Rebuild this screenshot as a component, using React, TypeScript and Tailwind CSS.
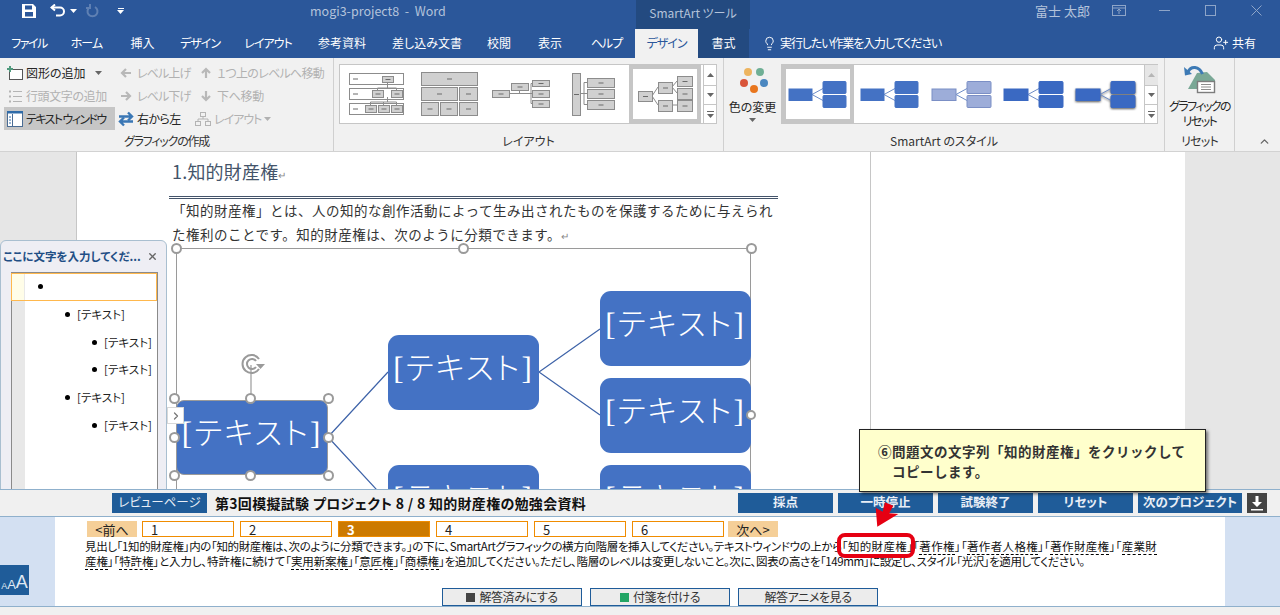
import { ChevronRight, ChevronUp, Lightbulb, UserPlus, X } from "lucide-react";
import type { ReactNode } from "react";

const tabs: [string, string][] = [
  ["ファイル", "w-[58px] tracking-[-1.5px]"],
  ["ホーム", "w-[57px] tracking-[-1px]"],
  ["挿入", "w-[55px]"],
  ["デザイン", "w-[60px] tracking-[-1px]"],
  ["レイアウト", "w-[76px] tracking-[-1px]"],
  ["参考資料", "w-[72px]"],
  ["差し込み文書", "w-[98px]"],
  ["校閲", "w-[46px]"],
  ["表示", "w-[56px]"],
  ["ヘルプ", "w-[57px] tracking-[-1px]"],
];

const Caret = ({ className = "" }: { className?: string }) => (
  <svg width="7" height="4" viewBox="0 0 7 4" className={className}>
    <path d="M0 0h7L3.5 4z" fill="currentColor" />
  </svg>
);

const Cmd = ({ icon, label, w, dim, active, caret, tight }: { icon: ReactNode; label: string; w: string; dim?: boolean; active?: boolean; caret?: boolean; tight?: string }) => (
  <div className={`flex h-[23px] items-center gap-[2px] pl-[1px] text-[12px] ${w} ${dim ? "text-[#b1b1b1]" : "text-[#262626]"} ${active ? "bg-[#c6c6c6]" : ""}`}>
    <span className="flex w-[19px] shrink-0 justify-center">{icon}</span>
    <span className={`whitespace-nowrap ${tight ?? ""}`}>{label}</span>
    {caret && <Caret className="ml-[7px] text-[#666]" />}
  </div>
);

const Arrow = ({ d }: { d: string }) => (
  <svg width="12" height="12" viewBox="0 0 12 12" fill="none" stroke="#b8b8b8" strokeWidth="2.2">
    <path d={d} />
  </svg>
);

const ScrollBtns = ({ dimTop }: { dimTop?: boolean }) => (
  <div className="flex h-full w-[14px] shrink-0 flex-col border-l border-[#c6c6c6] text-[#666]">
    <div className={`flex h-[21px] items-center justify-center border-b border-[#c6c6c6] ${dimTop ? "bg-[#e6e6e6] text-[#b5b5b5]" : ""}`}>
      <Caret className="rotate-180" />
    </div>
    <div className="flex h-[19px] items-center justify-center border-b border-[#c6c6c6]">
      <Caret />
    </div>
    <div className="flex flex-1 flex-col items-center justify-center gap-[2px]">
      <span className="h-px w-[7px] bg-[#666]" />
      <Caret />
    </div>
  </div>
);

const G = ({ x, y, w, h, dash = true }: { x: number; y: number; w: number; h: number; dash?: boolean }) => (
  <g>
    <rect x={x + 0.5} y={y + 0.5} width={w} height={h} fill="#d0d0d0" stroke="#8c8c8c" />
    {dash && <path d={`M${x + w / 2 - 2} ${y + h / 2 + 0.5}h5`} stroke="#6a6a6a" />}
  </g>
);

const LayoutThumbs = () => (
  <svg width="363" height="58" viewBox="339 65 363 58" className="shrink-0">
    <g fill="#fff" stroke="#8c8c8c">
      <rect x="348.5" y="73.5" width="54" height="11" />
      <rect x="348.5" y="88.5" width="54" height="11" />
      <rect x="348.5" y="103.5" width="54" height="11" />
    </g>
    <path d="M352 79h5M352 94h5M352 109h5" stroke="#6a6a6a" />
    <path d="M386.5 82v6M376.5 88h19M376.5 88v3M395.5 88v3M386.5 97v5M369.5 102h26M369.5 102v3M382.5 102v3M395.5 102v3" stroke="#8c8c8c" fill="none" />
    <G x={381} y={76} w={11} h={6} />
    <G x={371} y={90} w={11} h={7} />
    <G x={390} y={90} w={11} h={7} />
    <G x={364} y={105} w={11} h={7} />
    <G x={377} y={105} w={11} h={7} />
    <G x={390} y={105} w={11} h={7} />

    <G x={420} y={72} w={56} h={13} />
    <G x={420} y={87} w={36} h={13} />
    <G x={458} y={87} w={18} h={13} />
    <G x={420} y={102} w={17} h={13} />
    <G x={439} y={102} w={17} h={13} />
    <G x={458} y={102} w={18} h={13} />

    <path d="M508 93.5h23M518.5 90v4M530 83.5v20M530 83.5h1M530 103.5h1" stroke="#8c8c8c" fill="none" />
    <G x={491} y={90} w={17} h={7} />
    <G x={510} y={83} w={17} h={7} />
    <G x={531} y={80} w={17} h={6} />
    <G x={531} y={90} w={17} h={7} />
    <G x={531} y={100} w={17} h={7} />

    <path d="M579 93.5h7M583 82.5v22M583 82.5h3M583 104.5h3" stroke="#8c8c8c" fill="none" />
    <G x={571} y={73} w={8} h={42} />
    <G x={586} y={78} w={27} h={9} />
    <G x={586} y={89} w={27} h={9} />
    <G x={586} y={100} w={27} h={9} />

    <rect x="630" y="67" width="68" height="54" fill="none" stroke="#c6c6c6" strokeWidth="4" />
    <path d="M651 96l6-9M651 96l6 9M671 87l5-6M671 87l5 6M671 105h5" stroke="#8c8c8c" fill="none" />
    <G x={637} y={91} w={14} h={10} />
    <G x={657} y={82} w={14} h={11} />
    <G x={657} y={100} w={14} h={11} />
    <G x={676} y={76} w={15} h={10} />
    <G x={676} y={88} w={15} h={11} />
    <G x={676} y={100} w={15} h={11} />
  </svg>
);

const StyleShape = ({ x, w, fill, stroke, shadow }: { x: number; w: number; fill: string; stroke: string; shadow?: boolean }) => (
  <g style={shadow ? { filter: "drop-shadow(0 1px 1px #555)" } : undefined}>
    <path d={`M${x + w} 94.5l${11} -6M${x + w} 94.5l${11} 6`} stroke="#6d8cc7" fill="none" />
    <rect x={x} y="89" width={w} height="11.5" fill={fill} stroke={stroke} />
    <rect x={x + w + 11} y="81.5" width={w} height="12" rx="1" fill={fill} stroke={stroke} />
    <rect x={x + w + 11} y="95.5" width={w} height="12" rx="1" fill={fill} stroke={stroke} />
  </g>
);

const StyleThumbs = () => (
  <svg width="362" height="58" viewBox="781 65 362 58" className="shrink-0">
    <rect x="783" y="67" width="68" height="54" fill="none" stroke="#c6c6c6" strokeWidth="4" />
    <StyleShape x={788} w={23} fill="#4472c4" stroke="#4472c4" />
    <StyleShape x={860} w={23} fill="#4472c4" stroke="#4472c4" />
    <StyleShape x={931} w={24} fill="#9dadd9" stroke="#7b8fc5" />
    <StyleShape x={1003} w={24} fill="#3a69c2" stroke="#3a69c2" />
    <StyleShape x={1075} w={24} fill="#3a69c2" stroke="#3a69c2" shadow />
  </svg>
);

const Ribbon = () => (
  <div className="flex h-[94px] shrink-0 border-b border-[#d2d2d2] bg-[#f1f1f1]">
    {/* Graphic */}
    <div className="flex w-[334px] flex-col border-r border-[#d0d0d0] pt-[3px]">
      <div className="flex flex-1 pl-[4px]">
        <div className="flex w-[111px] flex-col">
          <Cmd
            w="w-[111px]"
            caret
            label="図形の追加"
            icon={
              <svg width="16" height="14" viewBox="0 0 16 14" fill="none">
                <rect x="2.5" y="3.5" width="13" height="10" stroke="#555" fill="#fff" />
                <path d="M3 0v6M0 3h6" stroke="#4e9a7d" strokeWidth="2" />
              </svg>
            }
          />
          <Cmd
            w="w-[111px]"
            dim
            label="行頭文字の追加"
            tight="tracking-[-0.4px]"
            icon={
              <svg width="14" height="14" viewBox="0 0 14 14" fill="none" stroke="#b4b4b4">
                <path d="M5 2.5h9M5 7.5h9M5 12.5h9" />
                <path d="M1 2.5h2M1 7.5h2M1 12.5h2" strokeWidth="2" />
              </svg>
            }
          />
          <Cmd
            w="w-[111px]"
            active
            label="テキスト ウィンドウ"
            tight="tracking-[-1.6px]"
            icon={
              <svg width="16" height="16" viewBox="0 0 16 16" fill="none">
                <rect x=".5" y=".5" width="15" height="15" fill="#fff" stroke="#4a6c94" />
                <path d="M0 1h16" stroke="#2f6ba8" strokeWidth="3" />
                <path d="M5.5 3v12" stroke="#4a6c94" />
                <path d="M2 6h2M2 9h2M2 12h2" stroke="#2f6ba8" />
              </svg>
            }
          />
        </div>
        <div className="flex w-[80px] flex-col">
          <Cmd w="w-[80px]" dim label="レベル上げ" tight="tracking-[-0.9px]" icon={<Arrow d="M11 6H2M6 2L2 6l4 4" />} />
          <Cmd w="w-[80px]" dim label="レベル下げ" tight="tracking-[-0.9px]" icon={<Arrow d="M1 6h9M6 2l4 4-4 4" />} />
          <Cmd
            w="w-[80px]"
            label="右から左"
            tight="tracking-[-0.6px]"
            icon={
              <svg width="16" height="16" viewBox="0 0 16 16" fill="none" stroke="#3a77b5" strokeWidth="2.4">
                <path d="M1 5.5h13M10 1.5l4 4-4 4" />
                <path d="M15 10.5H2M6 6.5l-4 4 4 4" />
              </svg>
            }
          />
        </div>
        <div className="flex flex-col">
          <Cmd w="w-[130px]" dim label="１つ上のレベルへ移動" tight="tracking-[-0.7px]" icon={<Arrow d="M6 11V2M2 6l4-4 4 4" />} />
          <Cmd w="w-[130px]" dim label="下へ移動" tight="tracking-[-0.3px]" icon={<Arrow d="M6 1v9M2 6l4 4 4-4" />} />
          <div className="flex h-[23px] items-center gap-[3px] text-[12px] text-[#b1b1b1]">
            <svg width="16" height="14" viewBox="0 0 16 14" fill="none" stroke="#b4b4b4">
              <rect x="5.5" y=".5" width="5" height="4" />
              <rect x=".5" y="9.5" width="5" height="4" />
              <rect x="10.5" y="9.5" width="5" height="4" />
              <path d="M8 5v2M3 9V7h10v2" />
            </svg>
            <span className="tracking-[-1px]">レイアウト</span>
            <Caret />
          </div>
        </div>
      </div>
      <div className="flex h-[20px] items-center justify-center text-[12px] tracking-[-1.2px] text-[#333]">グラフィックの作成</div>
    </div>

    {/* Layout gallery */}
    <div className="flex w-[390px] flex-col border-r border-[#d0d0d0] pt-[6px]">
      <div className="ml-[5px] flex h-[60px] w-[378px] items-center border border-[#c6c6c6] bg-white">
        <LayoutThumbs />
        <ScrollBtns />
      </div>
      <div className="mt-auto flex h-[20px] items-center justify-center text-[12px] text-[#333]">レイアウト</div>
    </div>

    {/* SmartArt styles */}
    <div className="flex w-[441px] flex-col border-r border-[#d0d0d0] pt-[6px]">
      <div className="flex">
        <div className="flex w-[57px] flex-col items-center">
          <svg width="30" height="32" viewBox="0 0 30 32">
            <circle cx="10" cy="8" r="4" fill="#edb45f" />
            <circle cx="22" cy="8" r="4" fill="#6faf95" />
            <circle cx="6" cy="19" r="4" fill="#d9553a" />
            <circle cx="26" cy="19" r="4" fill="#4b87c0" />
            <circle cx="16" cy="25" r="4" fill="#e8761e" />
          </svg>
          <span className="mt-[2px] text-[12px] leading-[17px] text-[#262626]">色の変更</span>
          <Caret className="mt-[3px] text-[#666]" />
        </div>
        <div className="flex h-[60px] w-[377px] items-center border border-[#c6c6c6] bg-white">
          <StyleThumbs />
          <ScrollBtns dimTop />
        </div>
      </div>
      <div className="mt-auto flex h-[20px] items-center justify-center text-[12px] text-[#333]">SmartArt のスタイル</div>
    </div>

    {/* Reset */}
    <div className="flex w-[70px] flex-col items-center border-r border-[#d0d0d0] pt-[6px]">
      <svg width="32" height="30" viewBox="0 0 32 30" fill="none" className="shrink-0">
        <path d="M4 25L13 9l10-1 8 8v9z" fill="#7aa896" />
        <rect x="13.5" y="17.5" width="17" height="11" fill="#fff" stroke="#7d7d7d" strokeWidth="1.4" />
        <path d="M17 20.5h10M17 23h10M17 25.5h10" stroke="#8d8d8d" />
        <path d="M18.5 10C15 2 7 1.500 4 8" stroke="#3d7ab5" strokeWidth="3" />
        <path d="M0 3l1 8.500 7-1.500z" fill="#3d7ab5" />
      </svg>
      <div className="mt-[4px] whitespace-nowrap text-center text-[12px] leading-[15px] tracking-[-1.6px] text-[#262626]">
        グラフィックの
        <br />
        リセット
      </div>
      <div className="mt-auto flex h-[20px] items-center text-[12px] tracking-[-0.8px] text-[#333]">リセット</div>
    </div>
    <div className="flex flex-1 items-end justify-end pb-[3px] pr-[9px]">
      <ChevronUp size={13} strokeWidth={2.5} className="text-[#666]" />
    </div>
  </div>
);

const Handle = ({ x, y, small }: { x: number; y: number; small?: boolean }) => (
  <span
    className={`absolute rounded-full border-[2px] border-[#9a9a9a] bg-white ${small ? "h-[10px] w-[10px]" : "h-[11px] w-[11px]"}`}
    style={{ left: x - 5, top: y - 5 }}
  />
);

const nodeText = "flex items-center justify-center bg-[#4472c4] pb-[6px] font-['Liberation_Serif','Noto_Sans_CJK_JP',serif] text-[31px] font-extralight tracking-[2px] text-white";

const Node = ({ x, y, h = 75 }: { x: number; y: number; h?: number }) => (
  <div className={`absolute w-[151px] rounded-[11px] ${nodeText}`} style={{ left: x, top: y, height: h }}>
    <span className="whitespace-nowrap">[テキスト]</span>
  </div>
);

const SmartArtCanvas = () => (
  <div className="relative ml-[7px] mt-[2px] h-[260px] w-[575px]">
    <div className="absolute left-0 top-0 h-[400px] w-[575px] border border-[#9a9a9a]" />
    <svg className="absolute left-0 top-0" width="575" height="260" fill="none" stroke="#3e63a8" strokeWidth="1.2">
      <path d="M152 189L212 124M152 189L212 254M363 124L424 81M363 124L424 167M363 254h61" />
      <path d="M75 117V152" stroke="#9a9a9a" />
    </svg>
    <Node x={212} y={87} />
    <Node x={424} y={43} />
    <Node x={424} y={130} />
    <Node x={212} y={217} />
    <Node x={424} y={217} />
    <div className={`absolute left-0 top-[152px] h-[75px] w-[152px] rounded-[8px] border border-[#9a9a9a] ${nodeText}`}>
      <span className="whitespace-nowrap">[テキスト]</span>
    </div>
    <Handle x={0} y={0} />
    <Handle x={287} y={0} />
    <Handle x={575} y={0} />
    <Handle x={575} y={167} small />
    <Handle x={-2} y={150} />
    <Handle x={74} y={150} />
    <Handle x={152} y={150} />
    <Handle x={-2} y={189} />
    <Handle x={152} y={189} />
    <Handle x={-2} y={227} />
    <Handle x={74} y={227} />
    <Handle x={152} y={227} />
    <svg className="absolute left-[64px] top-[105px]" width="26" height="22" viewBox="0 0 26 22" fill="none" stroke="#9a9a9a" strokeWidth="2">
      <path d="M19 16A9 9 0 1 1 19 6" />
      <path d="M16 14A5 5 0 1 1 16 8" />
      <path d="M16 11h9l-4.5 5z" fill="#9a9a9a" stroke="none" />
    </svg>
  </div>
);

const PaneRow = ({ pl, label }: { pl: string; label?: string }) => (
  <div className={`flex h-[27.7px] items-center gap-[7px] whitespace-nowrap ${pl}`}>
    <span className="relative z-10 h-[5px] w-[5px] rounded-full bg-black" />
    {label && <span>{label}</span>}
  </div>
);

const Pane = () => (
  <div className="absolute left-0 top-[88px] flex h-[261px] w-[167px] flex-col rounded-t-[6px] border border-[#a9bfd0] bg-[#eeeef4]">
    <div className="flex h-[31px] shrink-0 items-center justify-between pl-[2px] pr-[8px]">
      <span className="whitespace-nowrap text-[11.5px] font-bold text-[#1f4e85]">ここに文字を入力してくだ...</span>
      <X size={11} strokeWidth={3} className="text-[#666]" />
    </div>
    <div className="ml-[10px] flex h-[218px] w-[147px] border border-[#8a8a8a] bg-white">
      <div className="w-[13px] shrink-0 bg-[#e8e8e8]" />
      <div className="flex-1 text-[11.5px] text-[#222]">
        <PaneRow pl="pl-[13px]" />
        <PaneRow pl="pl-[40px]" label="[テキスト]" />
        <PaneRow pl="pl-[67px]" label="[テキスト]" />
        <PaneRow pl="pl-[67px]" label="[テキスト]" />
        <PaneRow pl="pl-[40px]" label="[テキスト]" />
        <PaneRow pl="pl-[67px]" label="[テキスト]" />
      </div>
    </div>
    <div className="absolute left-[10px] top-[32px] h-[28px] w-[146px] border border-[#ffb84d]">
      <div className="h-full w-[12px] bg-[#fffde8]" />
    </div>
  </div>
);

const DocArea = () => (
  <div className="relative flex min-h-0 flex-1 overflow-hidden bg-[#e6e6e6]">
    <div className="w-[77px] shrink-0 border-r border-[#c6c6c6]" />
    <div className="w-[794px] shrink-0 border-r border-[#c6c6c6] bg-white pl-[92px]">
      <div className="mt-[8px] h-[22px] whitespace-nowrap pl-[3px] text-[18px] font-normal leading-[22px] tracking-[0.2px] text-[#44546a]">
        1.知的財産権<span className="text-[10px] text-[#888]">↵</span>
      </div>
      <div className="mt-[14px] h-[3px] w-[609px] border-y border-[#44546a]" />
      <div className="-mt-[1px] pl-[3px] text-[13.5px] tracking-[0.5px] text-[#333] [font-feature-settings:normal]">
        <div className="h-[24px] whitespace-nowrap leading-[24px]">「知的財産権」とは、人の知的な創作活動によって生み出されたものを保護するために与えられ</div>
        <div className="h-[24px] whitespace-nowrap leading-[24px]">
          た権利のことです。知的財産権は、次のように分類できます。<span className="text-[10px] text-[#888]">↵</span>
        </div>
      </div>
      <SmartArtCanvas />
    </div>
    <div className="w-[314px] shrink-0 bg-white" />
    <Pane />
    <div className="absolute left-[167px] top-[255px] flex h-[17px] w-[17px] items-center justify-center border border-[#d8d8d8] bg-white">
      <ChevronRight size={12} strokeWidth={2.5} className="text-[#777]" />
    </div>
  </div>
);

const BlueBtn = ({ label, w }: { label: string; w: string }) => (
  <div className={`flex h-[20px] items-center justify-center whitespace-nowrap bg-[#1f5c99] text-[12.5px] font-bold leading-none text-[#e8eef6] ${w}`}>{label}</div>
);

const ExamBar = () => (
  <div className="flex h-[28px] shrink-0 items-center border-y border-[#8fb0cc] bg-[#f0f0f0] pb-[1px]">
    <div className="ml-[112px] flex h-[20px] w-[95px] items-center justify-center bg-[#1f5c99] text-[12.5px] leading-none text-[#e8eef6]">レビューページ</div>
    <div className="ml-[8px] w-[523px] whitespace-nowrap text-[14px] font-bold leading-none tracking-[0.3px] text-[#111]">第3回模擬試験 プロジェクト 8 / 8 知的財産権の勉強会資料</div>
    <div className="flex gap-[5px]">
      <BlueBtn label="採点" w="w-[95px]" />
      <BlueBtn label="一時停止" w="w-[95px]" />
      <BlueBtn label="試験終了" w="w-[95px]" />
      <BlueBtn label="リセット" w="w-[95px]" />
      <BlueBtn label="次のプロジェクト" w="w-[104px]" />
    </div>
    <div className="ml-[5px] flex h-[20px] w-[20px] items-center justify-center bg-[#444]">
      <svg width="14" height="16" viewBox="0 0 14 16" fill="#fff">
        <path d="M5.5 1h3v6H12l-5 5-5-5h3.5zM1 14h12v1.5H1z" />
      </svg>
    </div>
  </div>
);

const U = ({ children }: { children: ReactNode }) => <span className="border-b border-dashed border-black">{children}</span>;

const pages = ["1", "2", "3", "4", "5", "6"];

const BottomBtn = ({ label, mark }: { label: string; mark?: string }) => (
  <div className="flex h-[18px] w-[140px] items-center justify-center gap-[4px] border border-[#1f5c99] bg-[#ececec] text-[12px] leading-none tracking-[-0.4px] text-[#333]">
    {mark && <span className={`h-[9px] w-[9px] ${mark}`} />}
    {label}
  </div>
);

const QuestionPanel = () => (
  <div className="flex h-[89px] shrink-0 bg-white">
    <div className="flex w-[55px] shrink-0 items-end bg-[#d3e0f2] pb-[11px]">
      <div className="flex h-[30px] w-[29px] items-end justify-center bg-[#1f5c99] pb-[4px] font-['Liberation_Sans',sans-serif] leading-none text-[#dfe8f3]">
        <span className="text-[9px]">A</span>
        <span className="text-[13px]">A</span>
        <span className="text-[18px]">A</span>
      </div>
    </div>
    <div className="flex w-[1170px] flex-col pl-[32px] pt-[4px]">
      <div className="flex h-[16px] gap-[5px] text-[13px] leading-none">
        <div className="flex w-[50px] items-center justify-center bg-[#f5cf98] text-[#222]">&lt;前へ</div>
        <div className="flex gap-[6px]">
          {pages.map((p) => (
            <div
              key={p}
              className={`flex w-[92px] items-center border border-[#f08c00] pl-[8px] ${p === "3" ? "bg-[#cc7a00] font-bold text-white" : "bg-white text-[#222]"}`}
            >
              {p}
            </div>
          ))}
        </div>
        <div className="-ml-[1px] flex w-[50px] items-center justify-center bg-[#f5cf98] text-[#222]">次へ&gt;</div>
      </div>
      <div className="-ml-[2px] mt-[2px] whitespace-nowrap text-[11.5px] leading-[15px] text-[#111]">
        <div>
          <span className="tracking-[-0.36px]">見出し「1知的財産権」内の「知的財産権は、次のように分類できます。」の下に、SmartArtグラフィックの横方向階層を挿入してください。テキストウィンドウの上から</span>
          <span className="tracking-[0.34px]">
            「<U>知的財産権</U>」「<U>著作権</U>」「<U>著作者人格権</U>」「<U>著作財産権</U>」「<U>産業財</U>
          </span>
        </div>
        <div>
          <span className="tracking-[-0.1px]">
            <U>産権</U>」「<U>特許権</U>」と入力し、特許権に続けて「<U>実用新案権</U>」「<U>意匠権</U>」「<U>商標権</U>」
          </span>
          <span className="tracking-[-0.41px]">を追加してください。ただし、階層のレベルは変更しないこと。次に、図表の高さを「149mm」に設定し、スタイル「光沢」を適用してください。</span>
        </div>
      </div>
      <div className="ml-[355px] mt-auto flex gap-[8px]">
        <BottomBtn label="解答済みにする" mark="bg-[#444]" />
        <BottomBtn label="付箋を付ける" mark="bg-[#22a565]" />
        <BottomBtn label="解答アニメを見る" />
      </div>
    </div>
    <div className="flex-1 bg-[#d3e0f2]" />
  </div>
);

export default function App() {
  return (
    <div className="relative flex h-[615px] w-[1280px] flex-col overflow-hidden bg-[#f0f0f0] font-['Noto_Sans_CJK_JP',sans-serif] [font-feature-settings:'palt']">
      {/* Title bar */}
      <div className="flex h-[29px] shrink-0 items-start bg-[#2b579a] text-[12px] text-[#b4c3da]">
        <svg className="ml-[22px] mt-[4px]" width="14" height="14" viewBox="0 0 14 14" fill="#fff">
          <path d="M0 0h11l3 3v11H0zM3 1.5v4h7v-4zM3 8v4.5h8V8z" fillRule="evenodd" />
        </svg>
        <svg className="ml-[14px] mt-[4px]" width="16" height="14" viewBox="0 0 16 14" fill="none" stroke="#fff" strokeWidth="2">
          <path d="M1.5 3.5H10a4 4 0 0 1 0 8H6" />
          <path d="M5 .5L1.5 3.5 5 6.5" />
        </svg>
        <Caret className="ml-[4px] mt-[9px] text-white" />
        <svg className="ml-[9px] mt-[4px]" width="13" height="14" viewBox="0 0 13 14" fill="none" stroke="#5f80b3" strokeWidth="2">
          <path d="M9 3a5 5 0 1 1-5 0M4 0v4H0" />
        </svg>
        <div className="ml-[18px] mt-[8px] flex flex-col items-center gap-[1px] text-white">
          <span className="h-px w-[6px] bg-white" />
          <Caret />
        </div>
        <div className="mt-[2px] w-[512px] pl-[186px] text-[12.5px]">mogi3-project8&nbsp; -&nbsp; Word</div>
        <div className="flex h-full w-[114px] items-center justify-center bg-[#234a80] pb-[3px]">SmartArt ツール</div>
        <div className="ml-[285px] mt-[1px] w-[60px] text-[13px]">富士 太郎</div>
        <svg className="ml-[17px] mt-[5px]" width="14" height="11" viewBox="0 0 14 11" fill="none" stroke="#8ea5c8">
          <rect x=".5" y=".5" width="13" height="10" />
          <path d="M.5 3h13M7 9V4.5M5 6l2-2 2 2" />
        </svg>
        <svg className="ml-[33px] mt-[5px]" width="11" height="11" viewBox="0 0 11 11" stroke="#8ea5c8">
          <path d="M0 5.5h11" />
        </svg>
        <svg className="ml-[35px] mt-[5px]" width="11" height="11" viewBox="0 0 11 11" fill="none" stroke="#8ea5c8">
          <rect x=".5" y=".5" width="10" height="10" />
        </svg>
        <svg className="ml-[35px] mt-[5px]" width="11" height="11" viewBox="0 0 11 11" stroke="#8ea5c8">
          <path d="M.5.5l10 10M10.5.5l-10 10" />
        </svg>
      </div>

      {/* Tabs */}
      <div className="flex h-[29px] shrink-0 items-stretch bg-[#2b579a] pb-[1px] text-[12px] text-white">
        {tabs.map(([label, w]) => (
          <div key={label + w} className={`flex items-center justify-center ${w}`}>
            {label}
          </div>
        ))}
        <div className="-mb-[1px] flex w-[63px] items-center justify-center bg-[#f1f1f1] pb-[1px] tracking-[-1px] text-[#2b579a]">デザイン</div>
        <div className="-mb-[1px] flex w-[51px] items-center justify-center bg-[#234a80] pb-[1px]">書式</div>
        <div className="ml-[13px] flex w-[451px] items-center gap-[3px]">
          <Lightbulb size={15} strokeWidth={1.5} />
          <span className="tracking-[-1.1px]">実行したい作業を入力してください</span>
        </div>
        <div className="flex items-center gap-[3px]">
          <UserPlus size={16} strokeWidth={1.5} />
          <span>共有</span>
        </div>
      </div>

      <Ribbon />
      <DocArea />
      <ExamBar />
      <QuestionPanel />
      <div className="h-[9px] shrink-0 border-t border-[#8fb0cc] bg-[#f0f0f0]" />

      {/* Callout over the exam panel */}
      <svg className="absolute left-[866px] top-[490px]" width="34" height="40" viewBox="0 0 34 40">
        <path d="M19 12.300l8.300 3.400-4 7.600 9 .7L11.300 36.700 9.700 17.700l7 4z" fill="#e60012" />
      </svg>
      <div className="absolute left-[837px] top-[533px] h-[25px] w-[78px] rounded-[8px] border-[4px] border-[#e60012]" />
      <div className="absolute left-[859px] top-[429px] h-[63px] w-[347px] border border-[#222] bg-[#ffffcc] pl-[18px] pt-[11px] text-[13.5px] font-bold leading-[20px] tracking-[0.5px] text-[#333] shadow-[2px_2px_3px_rgba(0,0,0,0.5)] [font-feature-settings:normal]">
        <div className="whitespace-nowrap">⑥問題文の文字列「知的財産権」をクリックして</div>
        <div className="whitespace-nowrap pl-[14px]">コピーします。</div>
      </div>
    </div>
  );
}
